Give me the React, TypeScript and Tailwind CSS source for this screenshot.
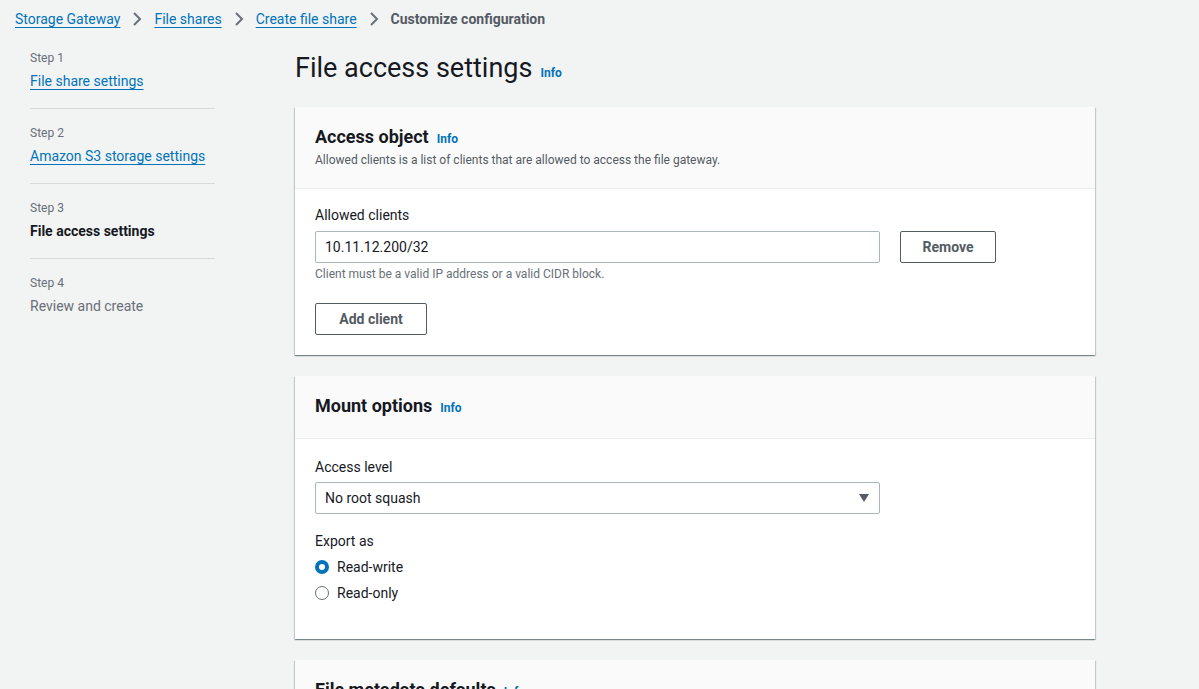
import React from "react";

// Wizard page: customize file share configuration
const steps = [
  { step: "Step 1", title: "File share settings", state: "done" },
  { step: "Step 2", title: "Amazon S3 storage settings", state: "done" },
  { step: "Step 3", title: "File access settings", state: "current" },
  { step: "Step 4", title: "Review and create", state: "todo" },
];

const Chevron = () => (
  <svg width="16" height="16" viewBox="0 0 16 16" className="mx-[9px] shrink-0">
    <polyline points="5,2 11,8 5,14" fill="none" stroke="#687078" strokeWidth="2" />
  </svg>
);

const Info = ({ className = "" }: { className?: string }) => (
  <a href="#" className={`text-[12px] font-bold text-[#0073bb] ${className}`}>
    Info
  </a>
);

const Card = ({
  title,
  description,
  children,
}: {
  title: string;
  description?: string;
  children?: React.ReactNode;
}) => (
  <section className="bg-white shadow-[0_1px_1px_0_rgba(0,28,36,0.3),1px_1px_1px_0_rgba(0,28,36,0.15),-1px_1px_1px_0_rgba(0,28,36,0.15)]">
    <div
      className={`bg-[#fafafa] border-b border-[#eaeded] px-5 ${
        description ? "pt-[19px] pb-[20px]" : "pt-[19px] pb-[19px]"
      }`}
    >
      <h2 className="flex items-baseline gap-2 text-[18px] leading-[22px] font-bold text-[#16191f]">
        {title}
        <Info />
      </h2>
      {description && (
        <p className="text-[12px] leading-4 text-[#545b64] mt-[2px]">{description}</p>
      )}
    </div>
    {children}
  </section>
);

const Radio = ({ label, checked }: { label: string; checked?: boolean }) => (
  <label className="flex items-center gap-2 h-[26px] text-[14px] text-[#16191f]">
    <span
      className={`w-[14px] h-[14px] rounded-full bg-white ${
        checked ? "border-[4px] border-[#0073bb]" : "border-[1.5px] border-[#687078]"
      }`}
    />
    {label}
  </label>
);

export default function App() {
  return (
    <div className="min-h-screen bg-[#f2f3f3] font-['Roboto',sans-serif] text-[#16191f] overflow-hidden h-[689px]">
      {/* breadcrumbs */}
      <nav className="flex items-center h-[38px] px-[15px] text-[14px]">
        <a href="#" className="text-[#0073bb] underline underline-offset-[3px]">Storage Gateway</a>
        <Chevron />
        <a href="#" className="text-[#0073bb] underline underline-offset-[3px]">File shares</a>
        <Chevron />
        <a href="#" className="text-[#0073bb] underline underline-offset-[3px]">Create file share</a>
        <Chevron />
        <span className="font-bold text-[#545b64]">Customize configuration</span>
      </nav>

      <div className="flex">
        {/* steps */}
        <aside className="w-[185px] ml-[30px] pt-[12px] shrink-0">
          {steps.map((s, i) => (
            <div
              key={s.step}
              className={`pb-[16px] ${i > 0 ? "pt-[16px]" : ""} ${
                i < steps.length - 1 ? "border-b border-[#d5dbdb]" : ""
              }`}
            >
              <div className="text-[12px] leading-4 text-[#687078]">{s.step}</div>
              <div className="mt-[4px] text-[14px] leading-[22px]">
                {s.state === "done" && (
                  <a href="#" className="text-[#0073bb] underline underline-offset-[3px]">{s.title}</a>
                )}
                {s.state === "current" && <span className="font-bold text-[#16191f]">{s.title}</span>}
                {s.state === "todo" && <span className="text-[#687078]">{s.title}</span>}
              </div>
            </div>
          ))}
        </aside>

        {/* main */}
        <main className="ml-[80px] w-[800px]">
          <h1 className="flex items-baseline gap-2 text-[27px] leading-[36px] font-normal text-[#16191f] pt-[12px] pb-[16px]">
            File access settings
            <Info className="text-[11px]" />
          </h1>

          <div className="flex flex-col gap-[21px]">
            <Card
              title="Access object"
              description="Allowed clients is a list of clients that are allowed to access the file gateway."
            >
              <div className="px-5 pt-[15px] pb-[20px]">
                <div className="text-[14px] leading-[22px]">Allowed clients</div>
                <div className="flex gap-5 mt-[5px]">
                  <input
                    defaultValue="10.11.12.200/32"
                    className="w-[565px] h-[32px] px-[9px] border border-[#aab7b8] rounded-[2px] text-[14px] text-[#16191f] outline-none"
                  />
                  <button className="w-[96px] h-[32px] border border-[#545b64] rounded-[2px] bg-white text-[14px] font-bold text-[#545b64]">
                    Remove
                  </button>
                </div>
                <p className="text-[12px] leading-4 text-[#687078] mt-[3px]">
                  Client must be a valid IP address or a valid CIDR block.
                </p>
                <button className="mt-[21px] w-[112px] h-[32px] border border-[#545b64] rounded-[2px] bg-white text-[14px] font-bold text-[#545b64]">
                  Add client
                </button>
              </div>
            </Card>

            <Card title="Mount options">
              <div className="px-5 pt-[17px] pb-[33px]">
                <div className="text-[14px] leading-[22px]">Access level</div>
                <div className="mt-[4px] w-[565px] h-[32px] px-[9px] border border-[#aab7b8] rounded-[2px] flex items-center justify-between text-[14px]">
                  <span>No root squash</span>
                  <svg width="12" height="10" viewBox="0 0 12 10">
                    <polygon points="1,1 11,1 6,9" fill="#545b64" />
                  </svg>
                </div>
                <div className="mt-[16px] text-[14px] leading-[22px]">Export as</div>
                <div className="mt-[2px]">
                  <Radio label="Read-write" checked />
                  <Radio label="Read-only" />
                </div>
              </div>
            </Card>

            <Card title="File metadata defaults">
              <div className="px-5 py-5 h-[200px]" />
            </Card>
          </div>
        </main>
      </div>
    </div>
  );
}
